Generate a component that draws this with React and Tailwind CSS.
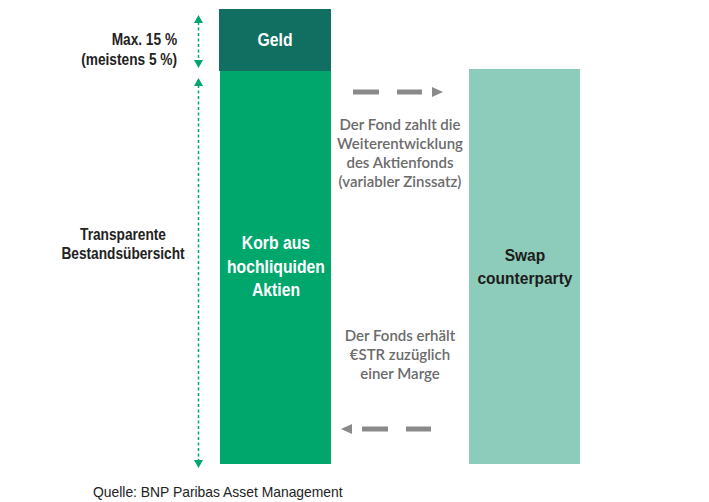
const VArrow = ({ height, top, bottom }) => (
  <svg width="17" height={height} className="overflow-visible block">
    <line x1="8.5" y1={top + 7} x2="8.5" y2={bottom - 7} stroke="#00a66b" strokeWidth="1.5" strokeDasharray="3 2.5" />
    <polygon points={`8.5,${top} 4,${top + 8} 13,${top + 8}`} fill="#00a66b" />
    <polygon points={`8.5,${bottom} 4,${bottom - 8} 13,${bottom - 8}`} fill="#00a66b" />
  </svg>
)

const HArrow = ({ dir }) => (
  <svg width="138" height="10" className="block">
    {dir === 'right' ? (
      <g fill="#8a8a8a">
        <rect x="22" y="2.5" width="26" height="5" />
        <rect x="66" y="2.5" width="25" height="5" />
        <polygon points="101,0 112,5 101,10" />
      </g>
    ) : (
      <g fill="#8a8a8a">
        <polygon points="21,0 10,5 21,10" />
        <rect x="31" y="2.5" width="26" height="5" />
        <rect x="75" y="2.5" width="25" height="5" />
      </g>
    )}
  </svg>
)

const midText = 'text-center text-[15px] leading-[19px] font-semibold text-[#6b6b6b] font-["Lato",sans-serif]'

export default function App() {
  return (
    <div className="w-[709px] h-[502px] bg-white pt-[9px] font-['Liberation_Sans',Arial,sans-serif]">
      <div className="grid grid-cols-[190px_17px_12px_112px_138px_111px] grid-rows-[62px_393px]">
        {/* row 1 */}
        <div className="pt-[21px] pr-[13px] text-right text-[16px] leading-[20px] font-bold text-[#222]">
          <div className="inline-block origin-right scale-x-[0.855]">
            Max. 15 %
            <br />
            (meistens 5 %)
          </div>
        </div>
        <div>
          <VArrow height={62} top={6} bottom={59} />
        </div>
        <div />
        <div className="bg-[#106f60] flex items-center justify-center text-white text-[18px] font-bold">
          <span className="inline-block scale-x-[0.875]">Geld</span>
        </div>
        <div />
        <div />

        {/* row 2 */}
        <div className="pt-[154px] pl-[57px] flex justify-center items-start text-center text-[16px] leading-[19px] font-bold text-[#222]">
          <div className="shrink-0 whitespace-nowrap scale-x-[0.855]">
            Transparente
            <br />
            Bestandsübersicht
          </div>
        </div>
        <div>
          <VArrow height={393} top={7} bottom={397} />
        </div>
        <div />
        <div className="bg-[#00a76d] ml-px flex items-center justify-center text-center text-white text-[18px] leading-[23.5px] font-bold">
          <div className="inline-block scale-x-[0.875]">
            Korb aus
            <br />
            hochliquiden
            <br />
            Aktien
          </div>
        </div>
        <div className="flex flex-col justify-between pt-[16px] pb-[30px]">
          <div>
            <HArrow dir="right" />
            <div className={`${midText} mt-[18px]`}>
              Der Fond zahlt die
              <br />
              Weiterentwicklung
              <br />
              des Aktienfonds
              <br />
              (variabler Zinssatz)
            </div>
          </div>
          <div>
            <div className={midText}>
              Der Fonds erhält
              <br />
              €STR zuzüglich
              <br />
              einer Marge
            </div>
            <div className="mt-[41px]">
              <HArrow dir="left" />
            </div>
          </div>
        </div>
        <div className="bg-[#8dcbba] -mt-[2px] flex items-center justify-center text-center text-[#1c1c1c] text-[17px] leading-[23px] font-bold">
          <div className="inline-block scale-x-[0.915]">
            Swap
            <br />
            counterparty
          </div>
        </div>
      </div>
      <div className="mt-[20px] pl-[93px] text-[15px] leading-[16px] text-[#222]">
        <span className="inline-block origin-left scale-x-[0.925]">Quelle: BNP Paribas Asset Management</span>
      </div>
    </div>
  )
}
